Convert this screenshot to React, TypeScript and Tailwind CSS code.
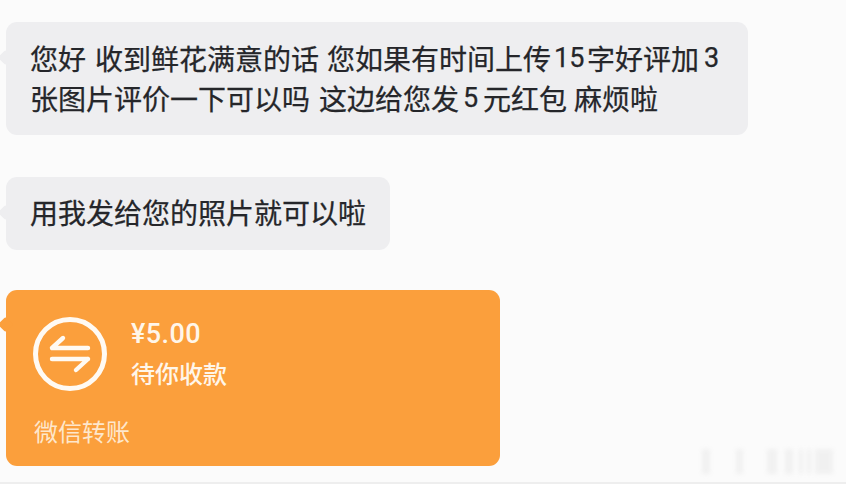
function Tail({ color, top }: { color: string; top: string }) {
  return <span className={`absolute left-[-6px] ${top} w-[11px] h-[11px] rotate-45 rounded-[2px] ${color}`} />;
}

function Num({ children, className }: { children: string; className: string }) {
  return <span className={`font-['Roboto'] text-[27px] ${className}`}>{children}</span>;
}

export default function App() {
  const marks = [
    { w: "w-[8px]", ml: "ml-[0px]" },
    { w: "w-[7px]", ml: "ml-[26px]" },
    { w: "w-[10px]", ml: "ml-[24px]" },
    { w: "w-[8px]", ml: "ml-[8px]" },
    { w: "w-[4px]", ml: "ml-[6px]" },
    { w: "w-[4px]", ml: "ml-[4px]" },
    { w: "w-[18px]", ml: "ml-[4px]" },
  ];
  return (
    <div className="w-[846px] h-[484px] overflow-hidden bg-[#fbfbfb] pt-[22px] pl-[6px] flex flex-col items-start text-[#25262a] relative font-['Noto_Sans_CJK_SC',sans-serif] [-webkit-text-stroke:0.25px_#25262a]">
      <div className="relative w-[742px] h-[113px] rounded-[11px] bg-[#eeeef0] pl-[24px] pt-[16px] text-[28px] leading-[40px] whitespace-nowrap">
        <Tail color="bg-[#eeeef0]" top="top-[30px]" />
        <div className="flex">
          <span>您好</span>
          <span className="ml-[9px]">收到鲜花满意的话</span>
          <span className="ml-[8px]">您如果有时间上传</span>
          <Num className="ml-[3px] w-[33px]">15</Num>
          <span>字好评加</span>
          <Num className="ml-[5px]">3</Num>
        </div>
        <div className="flex">
          <span>张图片评价一下可以吗</span>
          <span className="ml-[9px]">这边给您发</span>
          <Num className="ml-[4px] w-[20px]">5</Num>
          <span>元红包</span>
          <span className="ml-[7px]">麻烦啦</span>
        </div>
      </div>
      <div className="relative mt-[42px] w-[384px] h-[73px] rounded-[11px] bg-[#eeeef0] pl-[24px] pt-[15px] text-[28px] leading-[40px] whitespace-nowrap">
        <Tail color="bg-[#eeeef0]" top="top-[30px]" />
        用我发给您的照片就可以啦
      </div>
      <div className="relative mt-[40px] w-[494px] h-[176px] rounded-[11px] bg-[#fb9f3c] [-webkit-text-stroke:0px]">
        <Tail color="bg-[#fb9f3c]" top="top-[29px]" />
        <div className="flex pl-[27px] pt-[27px]">
          <svg width="74" height="74" viewBox="0 0 74 74" fill="none" stroke="#fffaf3" strokeLinecap="round" strokeLinejoin="round">
            <circle cx="37" cy="37" r="34.5" strokeWidth="5" />
            <path d="M19 31H55M19 31L30 21" strokeWidth="4.4" />
            <path d="M19 42H55M55 42L43 53" strokeWidth="4.4" />
          </svg>
          <div className="ml-[24px] mt-[0px] text-[#fff6ea]">
            <div className="text-[27px] leading-[34px] font-medium tracking-[0.4px] font-['Roboto']">¥5.00</div>
            <div className="text-[24px] leading-[34px] mt-[5px] font-medium">待你收款</div>
          </div>
        </div>
        <div className="pl-[28px] mt-[23px] text-[24px] leading-[34px] text-[#fee7cc]">微信转账</div>
      </div>
      <div className="absolute left-[702px] top-[449px] flex h-[25px] blur-[2px] opacity-40">
        {marks.map((m, i) => (
          <span key={i} className={`h-full bg-[#e2e2e2] ${m.w} ${m.ml}`} />
        ))}
      </div>
      <div className="absolute left-0 right-0 bottom-0 h-[2px] bg-[#eeeeee]" />
    </div>
  );
}
